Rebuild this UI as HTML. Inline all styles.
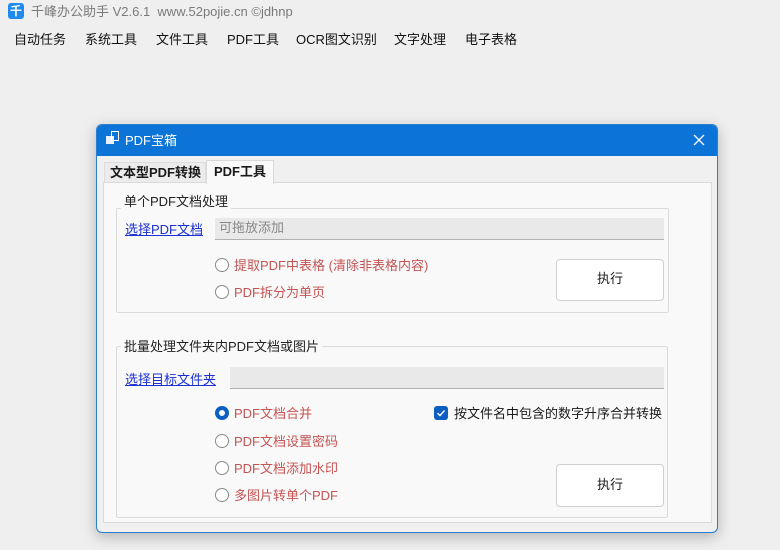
<!DOCTYPE html>
<html><head><meta charset="utf-8"><style>
*{margin:0;padding:0;box-sizing:border-box}
body{width:780px;height:550px;background:#efefef;font-family:"Liberation Sans","Noto Sans CJK SC",sans-serif;font-size:13px;position:relative;overflow:hidden;color:#1a1a1a}
.a{position:absolute;white-space:nowrap}
.menu span{position:absolute;top:29px;font-size:13px;color:#111}
.radio{position:absolute;width:14px;height:14px;border:1.5px solid #8a8a8a;border-radius:50%;background:#fff}
.rt{position:absolute;color:#c55454;font-size:13px}
.btn{position:absolute;background:#fff;border:1px solid #d0d0d0;border-radius:4px;text-align:center;font-size:13px}
.grp{position:absolute;border:1px solid #dcdcdc;border-radius:2px}
.leg{position:absolute;background:#f9f9f9;padding:0 3px;font-size:13px;color:#222}
.link{position:absolute;color:#1a30d0;text-decoration:underline;font-size:13px}
.inp{position:absolute;background:#e9e9e9;border-bottom:1px solid #b0b0b0;color:#888;font-size:13px;padding-left:4px;line-height:19px}
</style></head><body>
<div class="a" style="left:8px;top:3px;width:16px;height:16px;background:#1f8bf0;border-radius:3px;color:#fff;font-size:12px;line-height:16px;text-align:center;font-weight:bold">千</div>
<div class="a" style="left:31px;top:1px;color:#7a7a7a;font-size:13px">千峰办公助手 V2.6.1&nbsp; www.52pojie.cn ©jdhnp</div>
<div class="menu">
<span style="left:14px">自动任务</span><span style="left:85px">系统工具</span><span style="left:156px">文件工具</span><span style="left:227px">PDF工具</span><span style="left:296px">OCR图文识别</span><span style="left:394px">文字处理</span><span style="left:465px">电子表格</span>
</div>
<div class="a" style="left:96px;top:124px;width:622px;height:409px;background:#f0f0f0;border:1px solid #2a7fd0;border-radius:6px;box-shadow:0 4px 14px rgba(0,0,0,.25);overflow:hidden">
 <div class="a" style="left:0;top:0;width:620px;height:31px;background:#0b74d6"></div>
 <div class="a" style="left:9px;top:11px;width:8px;height:8px;background:#fff;opacity:.9"></div>
 <div class="a" style="left:14px;top:6px;width:8px;height:10px;border:1.5px solid #fff"></div>
 <div class="a" style="left:28px;top:5px;color:#fff;font-size:13px">PDF宝箱</div>
 <svg class="a" style="left:596px;top:9px" width="12" height="12"><path d="M1 1L11 11M11 1L1 11" stroke="#fff" stroke-width="1.3"/></svg>
</div>
<div class="a" style="left:104px;top:162px;width:102px;height:21px;background:#ececec;border:1px solid #ddd"></div>
<div class="a" style="left:110px;top:162px;font-weight:bold;font-size:13px">文本型PDF转换</div>
<div class="a" style="left:103px;top:182px;width:609px;height:341px;background:#f9f9f9;border:1px solid #dadada"></div>
<div class="a" style="left:206px;top:160px;width:68px;height:24px;background:#f9f9f9;border:1px solid #dadada;border-bottom:none"></div>
<div class="a" style="left:214px;top:161px;font-weight:bold;font-size:13px">PDF工具</div>

<div class="grp" style="left:116px;top:208px;width:553px;height:105px"></div>
<div class="leg" style="left:121px;top:191px">单个PDF文档处理</div>
<div class="link" style="left:125px;top:219px">选择PDF文档</div>
<div class="inp" style="left:215px;top:218px;width:449px;height:22px">可拖放添加</div>
<div class="radio" style="left:215px;top:258px"></div><div class="rt" style="left:234px;top:255px">提取PDF中表格 (清除非表格内容)</div>
<div class="radio" style="left:215px;top:285px"></div><div class="rt" style="left:234px;top:282px">PDF拆分为单页</div>
<div class="btn" style="left:556px;top:259px;width:108px;height:42px;line-height:38px">执行</div>

<div class="grp" style="left:116px;top:346px;width:552px;height:172px"></div>
<div class="leg" style="left:121px;top:336px">批量处理文件夹内PDF文档或图片</div>
<div class="link" style="left:125px;top:369px">选择目标文件夹</div>
<div class="inp" style="left:230px;top:367px;width:434px;height:22px"></div>
<div class="radio" style="left:215px;top:406px;border:4px solid #0a5fc0"></div><div class="rt" style="left:234px;top:403px">PDF文档合并</div>
<div class="radio" style="left:215px;top:434px"></div><div class="rt" style="left:234px;top:431px">PDF文档设置密码</div>
<div class="radio" style="left:215px;top:461px"></div><div class="rt" style="left:234px;top:458px">PDF文档添加水印</div>
<div class="radio" style="left:215px;top:488px"></div><div class="rt" style="left:234px;top:485px">多图片转单个PDF</div>
<div class="a" style="left:434px;top:406px;width:14px;height:14px;background:#0a5fc0;border-radius:3px"><svg width="14" height="14"><path d="M3.5 7.2L6 9.5L10.5 4.5" stroke="#fff" stroke-width="1.4" fill="none"/></svg></div>
<div class="a" style="left:454px;top:403px;font-size:13px">按文件名中包含的数字升序合并转换</div>
<div class="btn" style="left:556px;top:464px;width:108px;height:43px;line-height:39px">执行</div>
</body></html>
